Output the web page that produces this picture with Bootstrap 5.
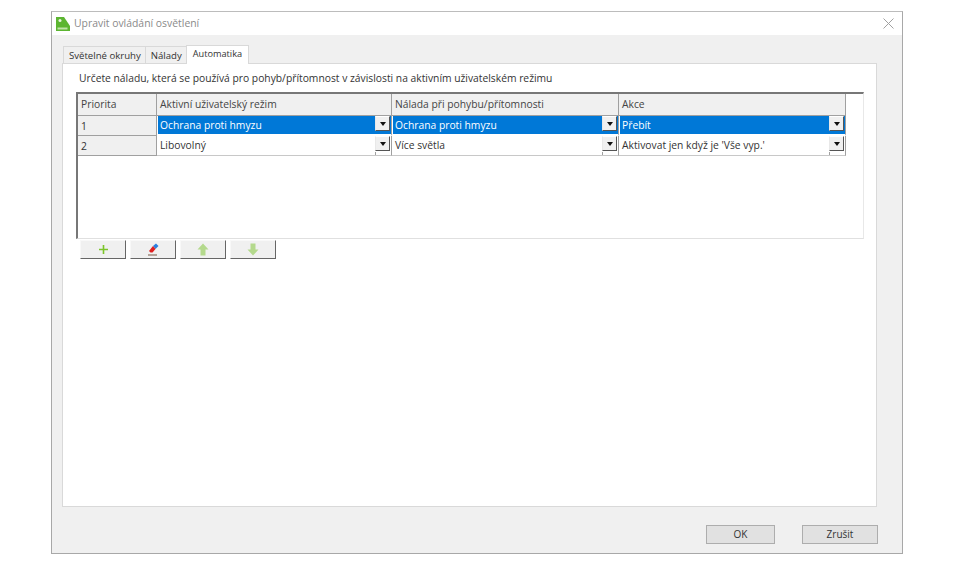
<!DOCTYPE html>
<html lang="cs">
<head>
<meta charset="utf-8">
<title>Upravit ovládání osvětlení</title>
<link href="https://cdn.jsdelivr.net/npm/bootstrap@5.3.0/dist/css/bootstrap.min.css" rel="stylesheet">
<style>
html,body{height:100%;background:#fff}
body{font-family:"Open Sans","Noto Sans",sans-serif;font-size:10.3px;color:#333;padding:11px 0 0 51px;overflow:hidden}
.win{width:852px;height:543px;background:#f0f0f0;border:1px solid #a8a8a8;border-top-color:#bcbcbc}
.titlebar{height:23px;background:#fff;padding-left:3px;color:#8a8a8a;font-size:10.4px}
.titlebar .ttl{margin-left:3px}
.closex{margin-right:8px}
.dlgbody{padding:10px 24px 0 10px}
.tabrow{height:18px;padding-left:1px;align-items:flex-end}
.tabi{height:17px;background:#f0f0f0;border:1px solid #d9d9d9;border-bottom:0;padding:0 4px 0 5px;line-height:17px;font-size:9.6px;color:#333;margin-right:-1px}
.tabi.on{height:19px;background:#fff;margin-bottom:-1px;position:relative;z-index:1;padding:0 6px;line-height:15px;margin-left:0;margin-right:0;font-size:9.2px}
.panel{height:444px;width:815px;background:#fff;border:1px solid #d9d9d9;padding:7px 12px 0 13px}
.hint{font-size:10.3px;line-height:15px;margin:0 0 6px 3px;color:#333;white-space:nowrap}
.gridbox{width:788px;height:147px;border-left:2px solid #777;border-top:2px solid #777;border-right:1px solid #e8e8e8;border-bottom:1px solid #e0e0e0;background:#fff}
.gt{border-collapse:separate;border-spacing:0;table-layout:fixed;width:768px}
.gt td,.gt th{font-weight:400;padding:0 0 0 3px;font-size:10.3px;height:19px;line-height:18px;border-right:1px solid #a0a0a0;border-bottom:1px solid #c8c8c8;position:relative;white-space:nowrap;color:#333}
.gt th{background:#f0f0f0;height:22px;border-bottom:1px solid #a0a0a0;color:#444;line-height:21px}
.gt td.pri{background:#f0f0f0;border-bottom:1px solid #a0a0a0}
.gt tr.r1 td{height:20px}
.gt td.sel{background:#0078d7;color:#fff;border-bottom:2px solid #fff;line-height:18px;box-shadow:inset 1px 0 0 #fff}
.gt td.plain{line-height:19px}
.dd{position:absolute;right:1px;top:0;width:15px;height:15px;background:#f0f0f0;border:1px solid;border-color:#fff #555 #555 #e8e8e8;display:flex;align-items:center;justify-content:center}
.dd i{display:block;width:0;height:0;border-left:3px solid transparent;border-right:3px solid transparent;border-top:4px solid #111}
.dd-tail{position:absolute;right:15px;bottom:0;width:1px;height:3px;background:#a0a0a0}
.tools{gap:4px;padding:1px 0 0 4px}
.tbtn{width:46px;height:19px;background:#f0f0f0;border:1px solid;border-color:#f8f8f8 #666 #666 #f8f8f8;padding:0;display:flex;align-items:center;justify-content:center;border-radius:0}
.foot{padding:18px 0 0 0;justify-content:flex-end}
.dbtn{height:19px;background:#e1e1e1;border:1px solid #adadad;border-radius:0;font-size:10px;line-height:17px;padding:0;color:#333}
.okb{width:69px;margin-right:27px}
.cab{width:76px}
.footwrap{width:816px}
</style>
</head>
<body>
<div class="win d-flex flex-column">
  <div class="titlebar d-flex align-items-center">
    <svg width="16" height="16" viewBox="0 0 16 16"><path d="M1 1h8l6 9v5H1z" fill="#5cb531"/><circle cx="5" cy="4.500" r="1.500" fill="#e8f5e0"/><rect x="2.500" y="11.500" width="10" height="2" fill="#bfe3a8"/></svg>
    <span class="ttl flex-grow-1">Upravit ovládání osvětlení</span>
    <svg class="closex" width="11" height="11" viewBox="0 0 11 11"><path d="M.5.500l10 10M10.500.500l-10 10" stroke="#a0a0a0" fill="none"/></svg>
  </div>
  <div class="dlgbody">
    <div class="tabrow d-flex">
      <div class="tabi">Světelné okruhy</div>
      <div class="tabi">Nálady</div>
      <div class="tabi on">Automatika</div>
    </div>
    <div class="panel">
      <p class="hint">Určete náladu, která se používá pro pohyb/přítomnost v závislosti na aktivním uživatelském režimu</p>
      <div class="gridbox">
        <table class="gt">
          <colgroup><col style="width:79px"><col style="width:235px"><col style="width:227px"><col style="width:227px"></colgroup>
          <tr><th>Priorita</th><th>Aktivní uživatelský režim</th><th>Nálada při pohybu/přítomnosti</th><th>Akce</th></tr>
          <tr class="r1"><td class="pri">1</td><td class="sel">Ochrana proti hmyzu<span class="dd"><i></i></span></td><td class="sel">Ochrana proti hmyzu<span class="dd"><i></i></span></td><td class="sel">Přebít<span class="dd"><i></i></span></td></tr>
          <tr><td class="pri">2</td><td class="plain">Libovolný<span class="dd"><i></i></span><span class="dd-tail"></span></td><td class="plain">Více světla<span class="dd"><i></i></span><span class="dd-tail"></span></td><td class="plain">Aktivovat jen když je 'Vše vyp.'<span class="dd"><i></i></span><span class="dd-tail"></span></td></tr>
        </table>
      </div>
      <div class="tools d-flex">
        <button class="tbtn" type="button" aria-label="Přidat"><svg width="11" height="11" viewBox="0 0 11 11"><path d="M5.500 1v9M1 5.500h9" stroke="#7cc52a" stroke-width="1.600" fill="none"/></svg></button>
        <button class="tbtn" type="button" aria-label="Smazat"><svg width="14" height="14" viewBox="0 0 14 14"><path d="M7 3l3-2.500 2.500 2.500-3 3z" fill="#2b80e0"/><path d="M7 3l2.500 3-3 3.500H4.500L3 8z" fill="#e02020"/><path d="M2 12h9" stroke="#8a7060" stroke-width="1.200"/></svg></button>
        <button class="tbtn" type="button" aria-label="Nahoru"><svg width="12" height="13" viewBox="0 0 12 13"><path d="M6 .500L11.500 6.500H8.500V12.500H3.500V6.500H.5z" fill="#b4d98c"/></svg></button>
        <button class="tbtn" type="button" aria-label="Dolů"><svg width="12" height="13" viewBox="0 0 12 13"><path d="M6 12.500L11.500 6.500H8.500V.5H3.500V6.500H.5z" fill="#b4d98c"/></svg></button>
      </div>
    </div>
    <div class="foot footwrap d-flex">
      <button class="dbtn okb" type="button">OK</button>
      <button class="dbtn cab" type="button">Zrušit</button>
    </div>
  </div>
</div>
</body>
</html>
